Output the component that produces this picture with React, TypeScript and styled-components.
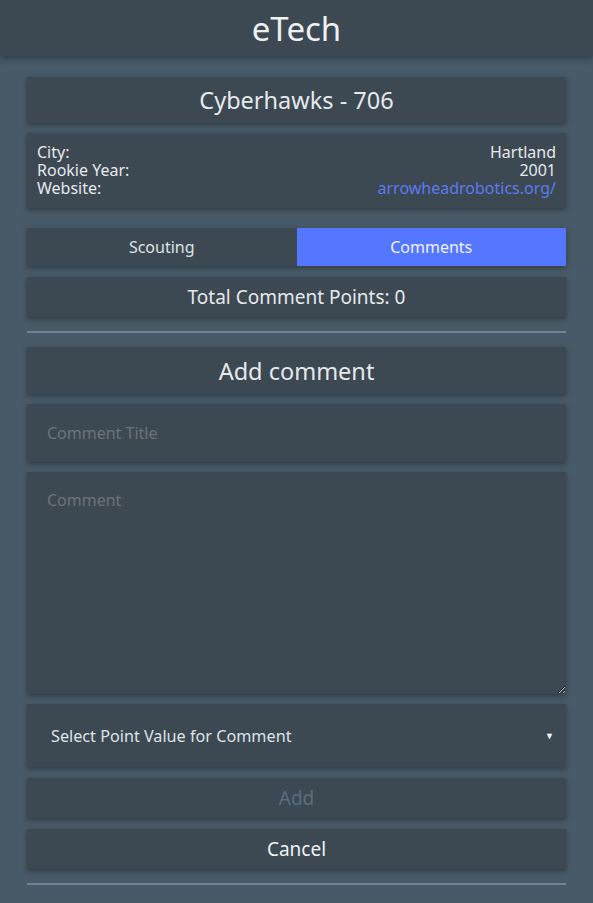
import styled, { createGlobalStyle } from "styled-components";

const GlobalStyle = createGlobalStyle`
  html, body {
    margin: 0;
    padding: 0;
    background: #485a67;
    font-family: "Noto Sans", "Open Sans", sans-serif;
    color: #e6e9ec;
  }
  * {
    box-sizing: border-box;
  }
`;

const App = () => {
  return (
    <Page>
      <GlobalStyle />
      <TopBar>eTech</TopBar>
      <Content>
        <TeamName>Cyberhawks - 706</TeamName>

        <InfoCard>
          <InfoRow>
            <span>City:</span>
            <span>Hartland</span>
          </InfoRow>
          <InfoRow>
            <span>Rookie Year:</span>
            <span>2001</span>
          </InfoRow>
          <InfoRow>
            <span>Website:</span>
            <Link href="#">arrowheadrobotics.org/</Link>
          </InfoRow>
        </InfoCard>

        <Tabs>
          <Tab>Scouting</Tab>
          <Tab active>Comments</Tab>
        </Tabs>

        <Points>Total Comment Points: 0</Points>

        <Divider />

        <AddTitle>Add comment</AddTitle>
        <TitleInput placeholder="Comment Title" />
        <CommentArea placeholder="Comment" />
        <SelectBox>
          <span>Select Point Value for Comment</span>
          <Caret>▼</Caret>
        </SelectBox>
        <ActionButton disabled>Add</ActionButton>
        <ActionButton>Cancel</ActionButton>

        <Divider />
      </Content>
    </Page>
  );
};

export default App;

const Page = styled.div`
  min-height: 903px;
  background: #485a67;
`;

const TopBar = styled.header`
  height: 56px;
  display: flex;
  align-items: center;
  justify-content: center;
  background: #3c4852;
  font-size: 33px;
  color: #eef0f2;
  box-shadow: 0 3px 6px rgba(0, 0, 0, 0.3);
  position: relative;
`;

const Content = styled.main`
  padding: 21px 27px 0;
  display: flex;
  flex-direction: column;
`;

const Card = styled.div`
  background: #3c4852;
  box-shadow: 0 2px 5px rgba(0, 0, 0, 0.35);
`;

const TeamName = styled(Card)`
  height: 46px;
  display: flex;
  align-items: center;
  justify-content: center;
  font-size: 23.5px;
  margin-bottom: 10px;
`;

const InfoCard = styled(Card)`
  padding: 10px 10px 11px;
  font-size: 16px;
  line-height: 18px;
  margin-bottom: 20px;
`;

const InfoRow = styled.div`
  display: flex;
  justify-content: space-between;
`;

const Link = styled.a`
  color: #5b7bf0;
  text-decoration: none;
`;

const Tabs = styled(Card)`
  display: flex;
  height: 38px;
  margin-bottom: 11px;
`;

const Tab = styled.div<{ active?: boolean }>`
  flex: 1;
  display: flex;
  align-items: center;
  justify-content: center;
  font-size: 16px;
  background: ${(p) => (p.active ? "#5577ff" : "transparent")};
  color: ${(p) => (p.active ? "#eef0ff" : "#dfe3e6")};
`;

const Points = styled(Card)`
  height: 40px;
  display: flex;
  align-items: center;
  justify-content: center;
  font-size: 19px;
`;

const Divider = styled.hr`
  border: none;
  height: 2px;
  background: #6f8493;
  margin: 14px 0;
  width: 100%;
`;

const AddTitle = styled(Card)`
  height: 47px;
  display: flex;
  align-items: center;
  justify-content: center;
  font-size: 23.5px;
  margin-bottom: 10px;
`;

const fieldStyles = `
  background: #3c4852;
  box-shadow: 0 2px 5px rgba(0, 0, 0, 0.35);
  border: none;
  outline: none;
  font-family: "Noto Sans", "Open Sans", sans-serif;
  font-size: 16px;
  color: #e6e9ec;
  padding: 0 20px;
  width: 100%;
  &::placeholder {
    color: #6c7378;
  }
`;

const TitleInput = styled.input`
  ${fieldStyles}
  height: 58px;
  margin-bottom: 10px;
`;

const CommentArea = styled.textarea`
  ${fieldStyles}
  height: 222px;
  padding-top: 17px;
  margin-bottom: 10px;
  resize: vertical;
  display: block;
`;

const SelectBox = styled(Card)`
  height: 63px;
  display: flex;
  align-items: center;
  justify-content: space-between;
  padding: 0 12px 0 24px;
  font-size: 16.2px;
  color: #dfe3e6;
  margin-bottom: 11px;
`;

const Caret = styled.span`
  font-size: 9px;
  color: #ffffff;
`;

const ActionButton = styled.button`
  height: 40px;
  background: #3c4852;
  box-shadow: 0 2px 5px rgba(0, 0, 0, 0.35);
  border: none;
  font-family: "Noto Sans", "Open Sans", sans-serif;
  font-size: 19px;
  color: #f0f2f4;
  margin-bottom: 11px;
  &:last-of-type {
    margin-bottom: 0;
  }
  &:disabled {
    color: #5b6e7d;
  }
`;
